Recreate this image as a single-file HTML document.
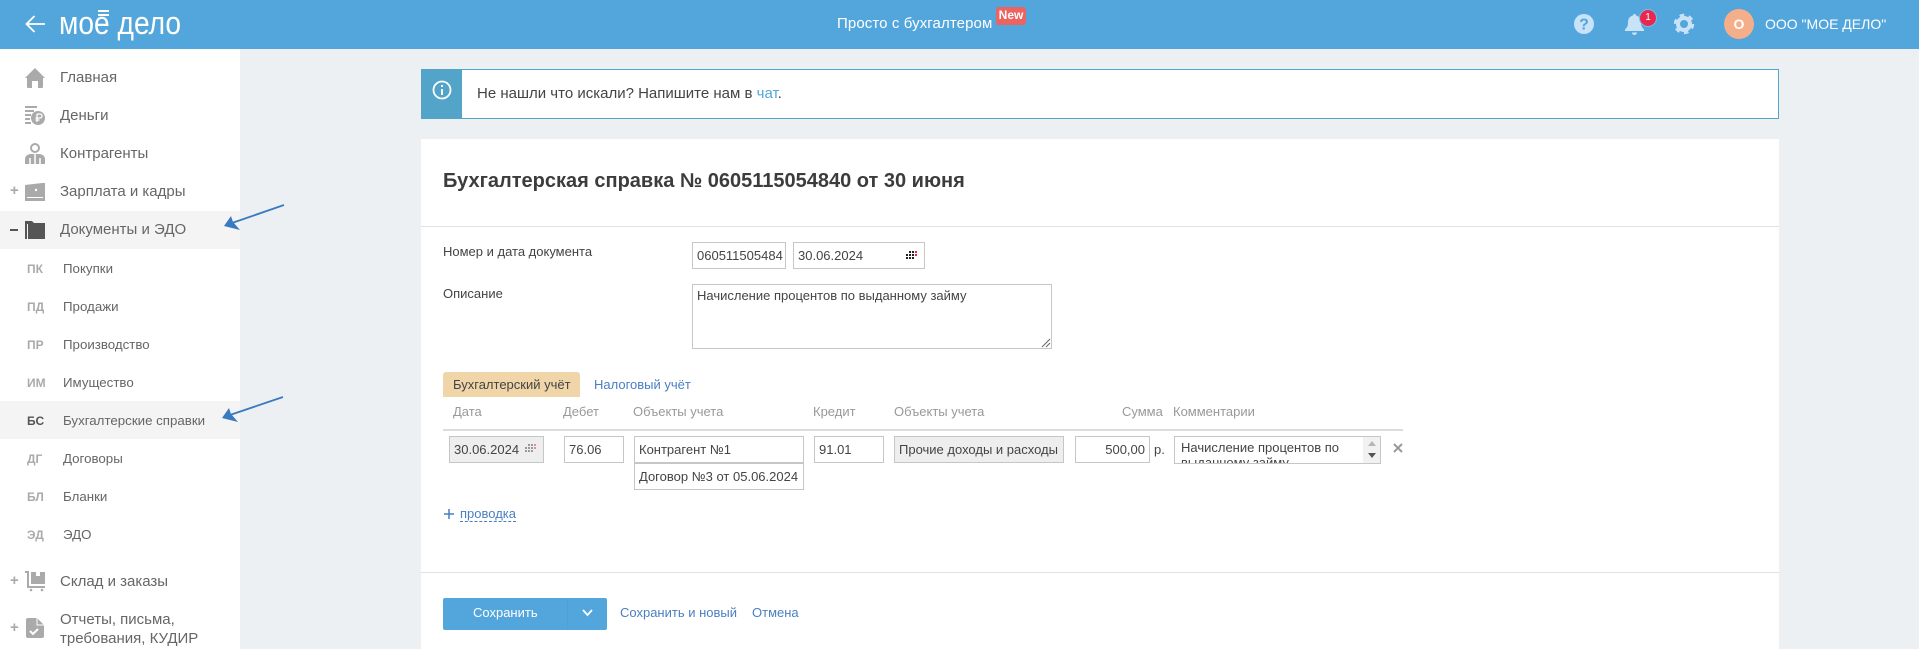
<!DOCTYPE html>
<html lang="ru"><head><meta charset="utf-8"><title>Бухгалтерская справка</title>
<style>
html,body{margin:0;padding:0}
body{width:1919px;height:649px;overflow:hidden;position:relative;background:#ecf0f3;font-family:"Liberation Sans",Arial,sans-serif;font-size:13px;color:#444}
.a,.t,.b{position:absolute;box-sizing:border-box}
.t{white-space:nowrap;line-height:20px;height:20px}
.b{border:1px solid #c6c6c6;background:#fff;height:27px;line-height:25px;padding-left:4px;white-space:nowrap;overflow:hidden;color:#444}
.g{background:#eeeeee}
.m{font-size:15px;color:#666}
.s{font-size:13.300px;color:#666;left:63px}
.k{font-size:12px;font-weight:bold;color:#aaa;left:27px}
.h{color:#999;top:402px}
.l{color:#4a7fc1}
svg{position:absolute;overflow:visible}
</style></head><body>

<div class="a" style="left:0;top:0;width:1919px;height:49px;background:#53a6dc"></div>
<svg style="left:25px;top:15px" width="20" height="18" viewBox="0 0 20 18" fill="none" stroke="#fff" stroke-width="1.800"><path d="M20 9H1.500M9.500 1L1.500 9l8 8"/></svg>
<div class="t" style="left:59px;top:13px;font-size:32px;line-height:20px;height:20px;color:#fff;transform:scaleX(.88);transform-origin:left center">мое дело</div>
<div class="a" style="left:98px;top:10px;width:11px;height:2px;background:#fff"></div>
<div class="a" style="left:98px;top:14px;width:11px;height:2px;background:#fff"></div>
<div class="t" style="left:837px;top:14px;color:#fff;font-size:15px;letter-spacing:.1px">Просто с бухгалтером</div>
<div class="a" style="left:996px;top:7px;width:30px;height:18px;background:#ec6461;border-radius:3px;color:#fff;font-weight:bold;font-size:12px;line-height:17px;text-align:center">New</div>
<svg style="left:1574px;top:14px" width="20" height="20" viewBox="0 0 20 20"><circle cx="10" cy="10" r="10" fill="#c8e2f7"/><text x="10" y="15.500" font-size="16" font-weight="bold" text-anchor="middle" fill="#53a6dc" font-family="Liberation Sans">?</text></svg>
<svg style="left:1625px;top:13px" width="19" height="22" viewBox="0 0 19 22" fill="#c8e2f7"><path d="M9.500 1c1 0 1.500.7 1.500 1.500C14.500 3.300 16 6 16 9.500c0 3.500 1 5 3 7v1.500H0v-1.500c2-2 3-3.500 3-7C3 6 4.500 3.300 8 2.500 8 1.700 8.500 1 9.500 1zM7 19.500h5c0 1.300-1 2.500-2.500 2.500S7 20.800 7 19.500z"/></svg>
<div class="a" style="left:1639px;top:9px;width:18px;height:18px;border-radius:50%;background:#e8294f;border:1px solid #7fb9e4;color:#fff;font-size:10px;line-height:16px;text-align:center">1</div>
<svg style="left:1674px;top:14px" width="20" height="20" viewBox="0 0 20 20" fill="none" stroke="#c8e2f7"><circle cx="10" cy="10" r="6" stroke-width="4"/><circle cx="10" cy="10" r="9" stroke-width="2.500" stroke-dasharray="4.700 4.725"/></svg>
<div class="a" style="left:1724px;top:9px;width:30px;height:30px;border-radius:50%;background:#f4ae8a;color:#fff;font-weight:bold;font-size:14px;line-height:30px;text-align:center">О</div>
<div class="t" style="left:1765px;top:14px;color:#fff;font-size:14px">ООО "МОЕ ДЕЛО"</div>

<div class="a" style="left:0;top:49px;width:240px;height:600px;background:#fff"></div>
<div class="a" style="left:0;top:211px;width:240px;height:38px;background:#f4f4f4"></div>
<div class="a" style="left:0;top:401px;width:240px;height:38px;background:#f4f4f4"></div>

<svg style="left:25px;top:68px" width="20" height="20" viewBox="0 0 20 20" fill="#aaa"><path d="M10 0l10 10h-2v9a1 1 0 01-1 1h-4v-7H7v7H3a1 1 0 01-1-1v-9H0z"/></svg>
<svg style="left:25px;top:105px" width="20" height="20" viewBox="0 0 20 20" fill="#aaa"><path d="M0 1h12v2H0zM0 5h9v2H0zM0 9h6v2H0zM0 13h5v2H0zM0 17h6v2H0z"/><circle cx="13" cy="13" r="7"/><path d="M12 9v8M12 9h3a2 2 0 010 4h-4.500M10.500 15h4" fill="none" stroke="#fff" stroke-width="1.300"/></svg>
<svg style="left:25px;top:143px" width="20" height="21" viewBox="0 0 20 21" fill="#aaa"><circle cx="10" cy="5" r="4" fill="none" stroke="#aaa" stroke-width="2"/><path d="M0 21v-5c0-3 3-5 6-5h8c3 0 6 2 6 5v5z"/><path d="M10 11v10M5 15v6M15 15v6" stroke="#fff" stroke-width="1.500"/></svg>
<svg style="left:25px;top:183px" width="20" height="18" viewBox="0 0 20 18" fill="#aaa"><path d="M0 2l17-2h3v18H0z"/><path d="M2 14.500h16" stroke="#fff"/><circle cx="11" cy="7" r="1.200" fill="#fff"/></svg>
<svg style="left:25px;top:221px" width="20" height="18" viewBox="0 0 20 18" fill="#555"><path d="M0 0h7l2 2h11v16H3V3H1v15H0z"/><path d="M1 0h1v18H0z"/></svg>
<svg style="left:25px;top:571px" width="20" height="20" viewBox="0 0 20 20" fill="#aaa"><path d="M0 0h4v15h16v2H2V2H0z"/><path d="M6 1h14v12H6z"/><path d="M11 1h4v4h-4z" fill="#fff"/><circle cx="6" cy="19" r="1.300"/><circle cx="17" cy="19" r="1.300"/></svg>
<svg style="left:26px;top:618px" width="18" height="20" viewBox="0 0 18 20" fill="#aaa"><path d="M2 0h9l7 7v11a2 2 0 01-2 2H2a2 2 0 01-2-2V2a2 2 0 012-2z"/><path d="M11 0v7h7" fill="none" stroke="#fff"/><path d="M4 13l3 3 5-5" fill="none" stroke="#fff" stroke-width="2"/></svg>

<div class="t m" style="left:60px;top:68px">Главная</div>
<div class="t m" style="left:60px;top:106px">Деньги</div>
<div class="t m" style="left:60px;top:144px">Контрагенты</div>
<div class="t m" style="left:10px;top:181px;color:#aaa;font-weight:bold">+</div>
<div class="t m" style="left:60px;top:182px">Зарплата и кадры</div>
<div class="a" style="left:10px;top:229px;width:8px;height:2px;background:#555"></div>
<div class="t m" style="left:60px;top:220px">Документы и ЭДО</div>
<div class="t k" style="top:259px">ПК</div><div class="t s" style="top:259px">Покупки</div>
<div class="t k" style="top:297px">ПД</div><div class="t s" style="top:297px">Продажи</div>
<div class="t k" style="top:335px">ПР</div><div class="t s" style="top:335px">Производство</div>
<div class="t k" style="top:373px">ИМ</div><div class="t s" style="top:373px">Имущество</div>
<div class="t k" style="top:411px;color:#555">БС</div><div class="t s" style="top:411px">Бухгалтерские справки</div>
<div class="t k" style="top:449px">ДГ</div><div class="t s" style="top:449px">Договоры</div>
<div class="t k" style="top:487px">БЛ</div><div class="t s" style="top:487px">Бланки</div>
<div class="t k" style="top:525px">ЭД</div><div class="t s" style="top:525px">ЭДО</div>
<div class="t m" style="left:10px;top:571px;color:#aaa;font-weight:bold">+</div>
<div class="t m" style="left:60px;top:572px">Склад и заказы</div>
<div class="t m" style="left:10px;top:618px;color:#aaa;font-weight:bold">+</div>
<div class="t m" style="left:60px;top:610px">Отчеты, письма,</div>
<div class="t m" style="left:60px;top:629px">требования, КУДИР</div>

<svg style="left:0;top:0" width="300" height="430" viewBox="0 0 300 430"><path d="M284 205L232 223" stroke="#3a7abf" stroke-width="1.800" fill="none"/><path d="M224 226L231 216 233 222 240 230z" fill="#3a7abf"/><path d="M283 397L230 415" stroke="#3a7abf" stroke-width="1.800" fill="none"/><path d="M222 418L229 408 231 414 238 422z" fill="#3a7abf"/></svg>

<div class="a" style="left:421px;top:69px;width:1358px;height:50px;background:#fff;border:1px solid #52a5c8;border-left:0"></div>
<div class="a" style="left:421px;top:69px;width:41px;height:50px;background:#52a5c8"></div>
<svg style="left:432px;top:80px" width="20" height="20" viewBox="0 0 20 20" fill="none" stroke="#fff" stroke-width="1.800"><circle cx="10" cy="10" r="8.500"/><path d="M10 9v6" stroke-width="2"/><path d="M10 5v2" stroke-width="2"/></svg>
<div class="t" style="left:477px;top:84px;font-size:15px;color:#444">Не нашли что искали? Напишите нам в <span style="color:#53a6dc">чат</span>.</div>

<div class="a" style="left:421px;top:139px;width:1358px;height:510px;background:#fff"></div>
<div class="a" style="left:421px;top:226px;width:1358px;height:1px;background:#e2e2e2"></div>
<div class="a" style="left:421px;top:572px;width:1358px;height:1px;background:#e2e2e2"></div>
<div class="t" style="left:443px;top:171px;font-size:20px;font-weight:bold;color:#3c3c3c">Бухгалтерская справка № 0605115054840 от 30 июня</div>

<div class="t" style="left:443px;top:242px;color:#444">Номер и дата документа</div>
<div class="t" style="left:443px;top:284px;color:#444">Описание</div>
<div class="b" style="left:692px;top:242px;width:94px">060511505484</div>
<div class="b" style="left:793px;top:242px;width:132px">30.06.2024</div>
<svg style="left:906px;top:251px" width="11" height="9" viewBox="0 0 11 9" fill="#222"><path d="M3 0h2v2H3zM6 0h2v2H6zM0 3h2v2H0zM3 3h2v2H3zM6 3h2v2H6zM0 6h2v2H0zM3 6h2v2H3zM6 6h2v2H6z"/><path d="M9 0h2v2H9zM9 3h2v2H9z" fill="#e8294f"/></svg>
<div class="b" style="left:692px;top:284px;width:360px;height:65px;line-height:16px;padding:3px 4px;white-space:normal">Начисление процентов по выданному займу</div>
<svg style="left:1041px;top:338px" width="9" height="9" viewBox="0 0 9 9" stroke="#666" fill="none"><path d="M1 9L9 1M5 9l4-4"/></svg>

<div class="a" style="left:443px;top:372px;width:137px;height:25px;background:#efd5a8;border-radius:3px 3px 0 0"></div>
<div class="t" style="left:453px;top:375px;color:#444">Бухгалтерский учёт</div>
<div class="t l" style="left:594px;top:375px">Налоговый учёт</div>

<div class="t h" style="left:453px">Дата</div>
<div class="t h" style="left:563px">Дебет</div>
<div class="t h" style="left:633px">Объекты учета</div>
<div class="t h" style="left:813px">Кредит</div>
<div class="t h" style="left:894px">Объекты учета</div>
<div class="t h" style="left:1122px;width:40px;text-align:right">Сумма</div>
<div class="t h" style="left:1173px">Комментарии</div>
<div class="a" style="left:443px;top:429px;width:960px;height:1.500px;background:#dcdcdc"></div>

<div class="b g" style="left:449px;top:436px;width:95px">30.06.2024</div>
<svg style="left:525px;top:444px" width="11" height="9" viewBox="0 0 11 9" fill="#999"><path d="M3 0h2v2H3zM6 0h2v2H6zM0 3h2v2H0zM3 3h2v2H3zM6 3h2v2H6zM0 6h2v2H0zM3 6h2v2H3zM6 6h2v2H6z"/><path d="M9 0h2v2H9zM9 3h2v2H9z" fill="#e88aa0"/></svg>
<div class="b" style="left:564px;top:436px;width:60px">76.06</div>
<div class="b" style="left:634px;top:436px;width:170px">Контрагент №1</div>
<div class="b" style="left:634px;top:463px;width:170px">Договор №3 от 05.06.2024</div>
<div class="b" style="left:814px;top:436px;width:70px">91.01</div>
<div class="b g" style="left:894px;top:436px;width:170px">Прочие доходы и расходы</div>
<div class="b" style="left:1075px;top:436px;width:75px;text-align:right;padding:0 4px 0 0">500,00</div>
<div class="t" style="left:1154px;top:440px">р.</div>
<div class="b" style="left:1174px;top:436px;width:207px;height:28px;line-height:15px;padding:3px 20px 0 6px;white-space:normal">Начисление процентов по выданному займу</div>
<div class="a" style="left:1363px;top:437px;width:17px;height:26px;background:#f1f1f1"></div>
<svg style="left:1368px;top:441px" width="8" height="17" viewBox="0 0 8 17"><path d="M4 0l4 5H0z" fill="#b5b5b5"/><path d="M0 12h8l-4 5z" fill="#555"/></svg>
<svg style="left:1393px;top:443px" width="10" height="10" viewBox="0 0 10 10" stroke="#999" stroke-width="2" fill="none"><path d="M1 1l8 8M9 1l-8 8"/></svg>

<svg style="left:444px;top:509px" width="10" height="10" viewBox="0 0 10 10" stroke="#4a7fc1" stroke-width="1.500" fill="none"><path d="M5 0v10M0 5h10"/></svg>
<div class="t l" style="left:460px;top:504px">проводка</div>
<div class="a" style="left:460px;top:521px;width:56px;border-top:1px dashed #4a7fc1"></div>

<div class="a" style="left:443px;top:598px;width:164px;height:32px;background:#53a6dc;border-radius:2px"></div>
<div class="a" style="left:567px;top:598px;width:1px;height:32px;background:#50a0d6"></div>
<div class="t" style="left:473px;top:603px;color:#fff">Сохранить</div>
<svg style="left:582px;top:609px" width="11" height="8" viewBox="0 0 11 8" stroke="#fff" stroke-width="1.800" fill="none"><path d="M1 1l4.500 5L10 1"/></svg>
<div class="t l" style="left:620px;top:603px">Сохранить и новый</div>
<div class="t l" style="left:752px;top:603px">Отмена</div>
</body></html>
